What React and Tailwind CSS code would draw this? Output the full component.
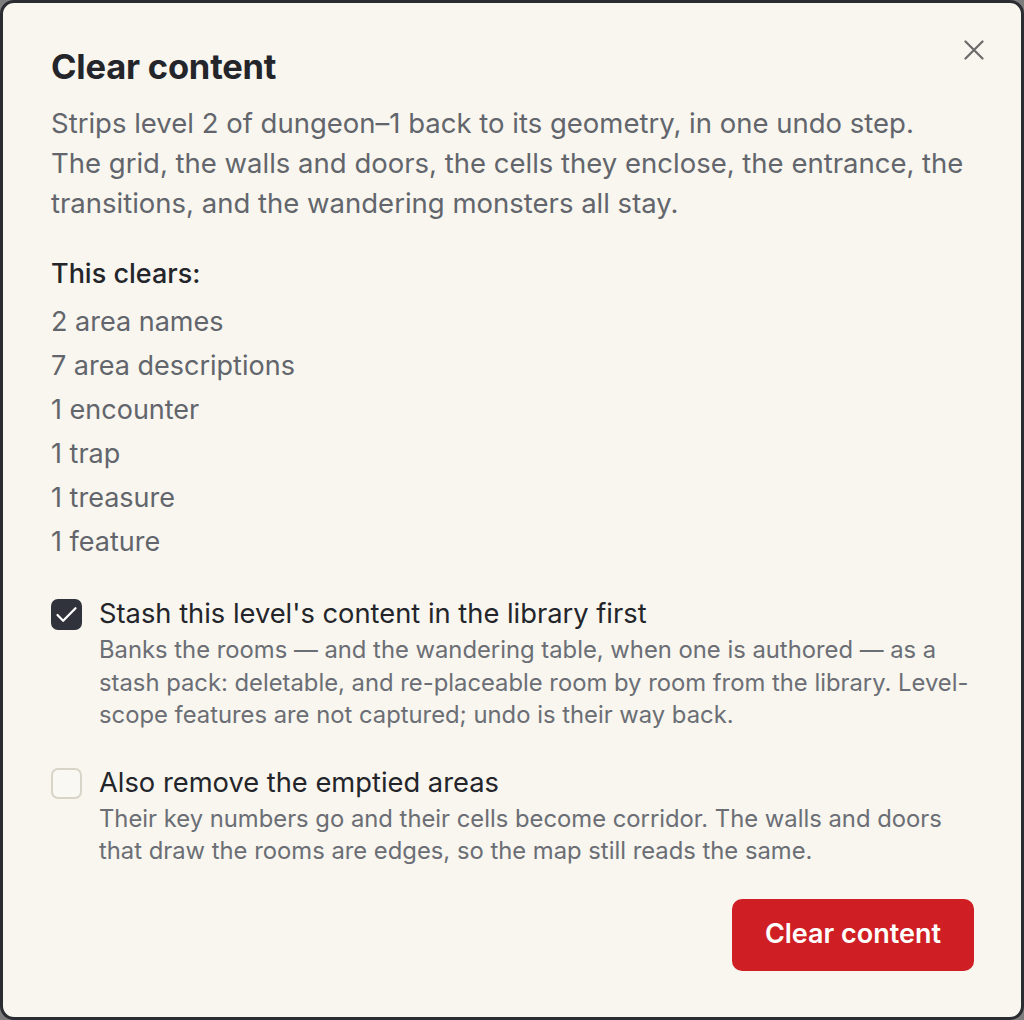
import React, { useState } from 'react';

const CLEARS = ['2 area names', '7 area descriptions', '1 encounter', '1 trap', '1 treasure', '1 feature'];

function Check({ checked, onChange, label, children }) {
  return (
    <div className="flex items-start gap-[17px]">
      <button
        type="button"
        onClick={onChange}
        className={`mt-[3px] w-[31px] h-[31px] shrink-0 rounded-[7px] flex items-center justify-center ${
          checked ? 'bg-[#30333b]' : 'border-2 border-[#d8d4c8] bg-[#faf8f2]'
        }`}
      >
        {checked && (
          <svg width="27" height="27" viewBox="0 0 24 24" fill="none" stroke="white" strokeWidth="2" strokeLinecap="round" strokeLinejoin="round">
            <path d="M4 12.5l5 5L20 6.5" />
          </svg>
        )}
      </button>
      <div>
        <div className="text-[27.3px] leading-[36px] text-[#23252a]">{label}</div>
        <p className="mt-[2px] text-[23.8px] leading-[32.5px] text-[#6b6e75]">{children}</p>
      </div>
    </div>
  );
}

export default function App() {
  const [stash, setStash] = useState(true);
  const [remove, setRemove] = useState(false);

  return (
    <div className="w-[1024px] h-[1020px] bg-[#7d7d7d]" style={{ fontFamily: 'Inter, "Noto Sans", sans-serif' }}>
      <div className="relative h-full border-[3px] border-[#2a2c31] rounded-[14px] bg-[#f8f6ee] pt-[44px] pl-[48px] pr-[47px]">
        <button type="button" className="absolute top-[37px] right-[37px] text-[#6a6a6a]">
          <svg width="20" height="20" viewBox="0 0 20 20" fill="none" stroke="currentColor" strokeWidth="2.2" strokeLinecap="round">
            <path d="M1.5 1.5l17 17M18.5 1.5l-17 17" />
          </svg>
        </button>

        <h2 className="text-[34.5px] leading-[40px] font-bold text-[#23252a] tracking-[-0.2px]">Clear content</h2>
        <p className="mt-[16px] max-w-[914px] text-[27.5px] leading-[40px] text-[#62656c]">
          Strips level 2 of dungeon–1 back to its geometry, in one undo step. The grid, the walls and doors, the cells they
          enclose, the entrance, the transitions, and the wandering monsters all stay.
        </p>

        <div className="mt-[31px] text-[27px] leading-[40px] font-medium text-[#23252a]">This clears:</div>
        <ul className="mt-[6px]">
          {CLEARS.map((c) => (
            <li key={c} className="text-[27px] leading-[44px] text-[#62656c]">
              {c}
            </li>
          ))}
        </ul>

        <div className="mt-[32px] space-y-[33px]">
          <Check checked={stash} onChange={() => setStash(!stash)} label="Stash this level's content in the library first">
            Banks the rooms — and the wandering table, when one is authored — as a stash pack: deletable, and re-placeable
            room by room from the library. Level-scope features are not captured; undo is their way back.
          </Check>
          <Check checked={remove} onChange={() => setRemove(!remove)} label="Also remove the emptied areas">
            Their key numbers go and their cells become corridor. The walls and doors that draw the rooms are edges, so the
            map still reads the same.
          </Check>
        </div>

        <div className="mt-[31px] flex justify-end">
          <button type="button" className="w-[242px] h-[72px] rounded-[10px] bg-[#cf1f24] text-white text-[27px] font-semibold">
            Clear content
          </button>
        </div>
      </div>
    </div>
  );
}
